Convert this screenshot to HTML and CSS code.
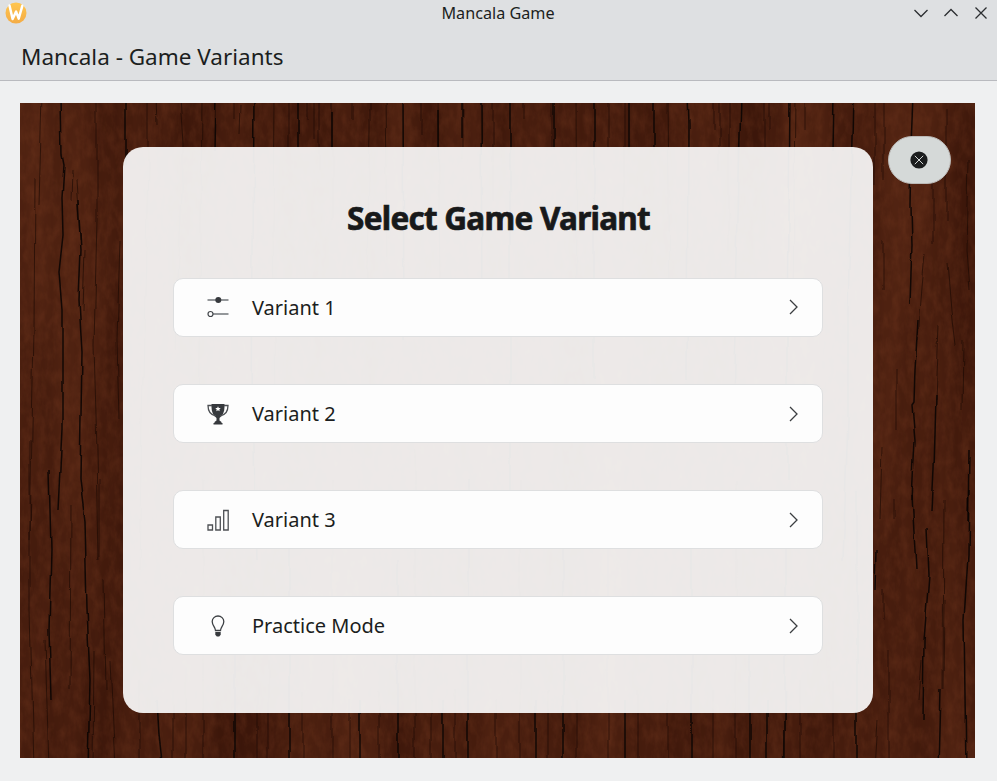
FILE: index.html
```html
<!DOCTYPE html>
<html lang="en">
<head>
<meta charset="utf-8">
<title>Mancala Game</title>
<link rel="stylesheet" href="styles.css">
</head>
<body>
<header class="titlebar">
  <svg class="app-icon" viewBox="0 0 22 22"><defs><linearGradient id="sun" x1="0" y1="0" x2="0" y2="1"><stop offset="0" stop-color="#ffc64f"/><stop offset="1" stop-color="#f4ac45"/></linearGradient></defs><circle cx="11" cy="11" r="10.5" fill="url(#sun)"/><path d="M4.500 3.500 7.600 17 11.100 9.600 13.700 16.600 17.300 3.800" fill="none" stroke="#fff" stroke-width="2.500" stroke-linejoin="round" stroke-linecap="round"/></svg>
  <span class="window-title">Mancala Game</span>
  <div class="controls">
    <svg viewBox="0 0 14 14"><path d="M.5 4 7 10.500 13.500 4"/></svg>
    <svg viewBox="0 0 14 14"><path d="M.5 10 7 3.500 13.500 10"/></svg>
    <svg viewBox="0 0 14 14"><path d="M1.500 1.500l11 11M12.500 1.500l-11 11"/></svg>
  </div>
</header>
<div class="toolbar"><h1>Mancala - Game Variants</h1></div>
<main class="page">
  <div class="board">
    <svg class="wood" viewBox="20 103 955 655" preserveAspectRatio="none">
      <defs>
        <filter id="grain" x="0" y="0" width="1" height="1" color-interpolation-filters="sRGB">
          <feTurbulence type="fractalNoise" baseFrequency="0.022 0.002" numOctaves="5" seed="8"/>
          <feColorMatrix values="0.15 0 0 0 0.205  0.09 0 0 0 0.069  0.055 0 0 0 0.027  0 0 0 0 1"/>
        </filter>
        <filter id="mottle" x="0" y="0" width="1" height="1" color-interpolation-filters="sRGB">
          <feTurbulence type="fractalNoise" baseFrequency="0.13 0.07" numOctaves="4" seed="3"/>
          <feColorMatrix values="0 0 0 0 0.50  0 0 0 0 0.25  0 0 0 0 0.14  0.5 0 0 0 -0.19"/>
        </filter>
        <filter id="rough" x="0" y="0" width="1" height="1" color-interpolation-filters="sRGB">
          <feTurbulence type="fractalNoise" baseFrequency="0.025 0.02" numOctaves="2" seed="5"/>
          <feDisplacementMap in="SourceGraphic" scale="6" xChannelSelector="R" yChannelSelector="G"/>
        </filter>
      </defs>
      <rect x="20" y="103" width="955" height="655" filter="url(#grain)"/>
      <rect x="20" y="103" width="955" height="655" filter="url(#mottle)"/>
      <g filter="url(#rough)">
        <rect x="20" y="95" width="955" height="675" fill="none"/>
        <g class="fine">
          <path d="M42 95 39 205M35 180 34 330 32 430 30 540M97 95V220L94 345 97 450 99 560M72 170 71 200M76 180 80 240M120 240 117 340 119 420M85 250 83 310M30 440V610L34 770M71 505 70 690M100 480V560M104 580 106 690M45 640 49 770M110 660 115 770M94 650 93 770"/>
          <path d="M148 95V165L142 420 139 570M157 95 158 125M180 95 183 145V170L175 350M202 95 201 230 198 420M235 95V120M241 105 240 135M274 95 273 240 276 390M288 95V150M307 98V120M314 100V140M319 103V170M332 95V220M353 100V120M370 95V130L366 310M385 95 387 260M422 100V135M438 95 440 290M463 95V160M492 95V200M523 98V120M552 95V150M576 95 577 310M608 95V150M624 95V220M668 95 670 310M713 95V130M719 95V170M729 95V250M765 95V150M770 98V130M795 95 793 310M805 95V130M875 95V185"/>
          <path d="M139 680V770M172 690V770M185 670V770M257 690V770M268 660V770M303 690V770M203 480V770M333 480V770M350 700V770M379 690V770M415 450V770M431 700V770M455 690V770M496 700V770M520 480V770M548 690V770M577 700V770M608 500V770M638 690V770M667 700V770M713 690V770M736 480V770M786 690 784 770M800 680V770M833 680V770M884 95V180M933 180V245M946 110V220M969 160 967 250 970 290M883 240V290M925 255 921 300 918 340M948 265 952 310 956 345M939 325 936 400M896 370V430M963 340 962 410M889 650V770M878 720 875 770M922 660 919 700M945 600 944 690M883 590V620M893 500V520M882 447 880 520M944 500 943 690"/>
        </g>
        <g class="crack">
          <path d="M61 95 62 155 64 165 62 198 63 235 59 272 62 310V430L58 510M78 200 81 250 79 300 82 352 80 480 85 520 87 610 90 680 88 770M49 470 51 550 49 630 51 700"/>
          <path d="M126 95V165M216 95 215 150M254 95 252 410 256 560M298 95V150M332 110V150M403 95 404 340M438 110V150M462 95V140M481 95 482 320M510 95V500M554 95V150M594 95V380M628 95V150M655 95V150M687 95 688 125 687 380M741 95 736 300 733 400M789 95 787 340V480M834 95 833 150M853 95 848 310V420L843 560M913 95 911 145 910 205 911 245 909 305M918 320 915 370 914 402 912 405 915 440 912 500M936 395 934 470 932 510M969 450 968 520"/>
          <path d="M157 700 159 735 163 770M235 600V770M289 500V770M360 700V770M398 560V770M443 700V770M468 480V770M536 700V770M563 540V770M625 700V770M692 500V770M750 640V770M767 700V770M785 500V770M857 490V770M912 495 916 570M927 527 929 575 924 640 923 720M969 490 968 555 964 620 966 770M941 690 939 770M877 550 876 590"/>
        </g>
      </g>
    </svg>
    <section class="card">
      <h2>Select Game Variant</h2>
      <div class="options">
        <div class="option">
          <svg class="icon" viewBox="0 0 22 22"><path d="M.5 4h21M6 18h15.500" stroke="#727579" stroke-width="1.400"/><circle cx="11.300" cy="4" r="3" fill="#36393d"/><circle cx="3.500" cy="18" r="2.500" fill="none" stroke="#42464a" stroke-width="1.200"/></svg>
          <span>Variant 1</span>
          <svg class="chevron" viewBox="0 0 10 16"><path d="M1 1 8 8 1 15"/></svg>
        </div>
        <div class="option">
          <svg class="icon" viewBox="0 0 22 22"><path d="M4.500 1h13v3c0 5-1.800 8.500-5 11v2.500l2 1.500v1h1v1.500h-9V20h1v-1l2-1.500V15C6.300 12.500 4.500 9 4.500 4Z" fill="#36393d"/><path d="M5 2.500H1C1 8 3 12 9 13M17 2.500h4C21 8 19 12 13 13" fill="none" stroke="#4b4e52" stroke-width="1.300"/><path d="m11 3.200.8 1.700 1.900.2-1.400 1.300.4 1.900-1.700-1-1.700 1 .4-1.900-1.400-1.300 1.900-.2Z" fill="#fff"/></svg>
          <span>Variant 2</span>
          <svg class="chevron" viewBox="0 0 10 16"><path d="M1 1 8 8 1 15"/></svg>
        </div>
        <div class="option">
          <svg class="icon" viewBox="0 0 22 22"><path d="M1 16h4.500v5H1ZM8.800 8h4.500v13H8.800ZM16.700 1.500h4.500V21h-4.500Z" fill="none" stroke="#4d5054" stroke-width="1.300"/></svg>
          <span>Variant 3</span>
          <svg class="chevron" viewBox="0 0 10 16"><path d="M1 1 8 8 1 15"/></svg>
        </div>
        <div class="option">
          <svg class="icon" viewBox="0 0 22 22"><path d="M8.500 15.500C8.300 12 5.200 10.500 5.200 6.500a5.800 5.500 0 0 1 11.600 0c0 4-3.100 5.500-3.300 9Z" fill="none" stroke="#3d4044" stroke-width="1.300"/><path d="M8.300 17h5.400v2.800l-1.500 1.700H9.800l-1.500-1.700Z" fill="#36393d"/></svg>
          <span>Practice Mode</span>
          <svg class="chevron" viewBox="0 0 10 16"><path d="M1 1 8 8 1 15"/></svg>
        </div>
      </div>
    </section>
    <div class="close"><svg viewBox="0 0 18 18"><circle cx="9" cy="9" r="8.600" fill="#1b1d1e"/><path d="m4.800 4.800 8.400 8.400m0-8.400-8.400 8.400" stroke="#d5d9d8" stroke-width="1"/></svg></div>
  </div>
</main>
</body>
</html>
```
FILE: styles.css
```css
* { box-sizing: border-box; }
body {
  margin: 0;
  width: 997px;
  height: 781px;
  overflow: hidden;
  background: #eff0f1;
  color: #1b1e20;
  font-family: "Noto Sans", sans-serif;
}
h1, h2 { margin: 0; }
.titlebar {
  display: grid;
  grid-template-columns: 100px 1fr 100px;
  align-items: center;
  height: 26px;
  padding: 0 9px 0 5px;
  background: #dee0e2;
}
.app-icon { width: 22px; height: 22px; }
.window-title { font-size: 16.200px; line-height: 26px; text-align: center; padding-left: 3px; }
.controls { display: flex; justify-content: flex-end; gap: 16px; }
.controls svg { width: 14px; height: 14px; fill: none; stroke: #2b2e31; stroke-width: 1.300; }
.toolbar {
  height: 55px;
  padding: 13px 21px 0;
  background: #dee0e2;
  border-bottom: 1px solid #b9babf;
}
.toolbar h1 { font-size: 22.500px; line-height: 36px; font-weight: 400; }
.page { padding: 22px 22px 23px 20px; }
.board {
  position: relative;
  width: 955px;
  height: 655px;
  padding: 44.400px 102px 0 103px;
  background: #491f0f;
}
.wood { position: absolute; inset: 0; width: 955px; height: 655px; }
.fine { fill: none; stroke: #180803; stroke-opacity: .6; stroke-width: 1; }
.crack { fill: none; stroke: #090403; stroke-opacity: .88; stroke-width: 1.500; }
.card {
  position: relative;
  width: 750px;
  height: 566px;
  padding: 48.600px 50px 0;
  border-radius: 20px;
  background: rgba(251, 251, 251, .92);
}
.card h2 {
  padding-left: 1px;
  font-size: 31.500px;
  line-height: 44px;
  font-weight: 700;
  letter-spacing: -.750px;
  text-align: center;
  color: #18191a;
  -webkit-text-stroke: .7px #18191a;
}
.options { display: flex; flex-direction: column; gap: 47.100px; margin-top: 38px; }
.option {
  display: flex;
  align-items: center;
  height: 59px;
  padding: 0 23px 0 33px;
  border: 1px solid #dedfe0;
  border-radius: 10px;
  background: #fdfdfd;
  font-size: 20px;
}
.icon { width: 22px; height: 22px; margin-right: 23px; }
.option span { flex: 1; }
.chevron { width: 10px; height: 16px; fill: none; stroke: #3b3e41; stroke-width: 1.300; }
.close {
  position: absolute;
  left: 868px;
  top: 33px;
  width: 63px;
  height: 48px;
  display: grid;
  place-items: center;
  padding-right: 1px;
  border: 1px solid #bbb9b7;
  border-radius: 24px;
  background: #d5d9d8;
}
.close svg { width: 18px; height: 18px; }
```
